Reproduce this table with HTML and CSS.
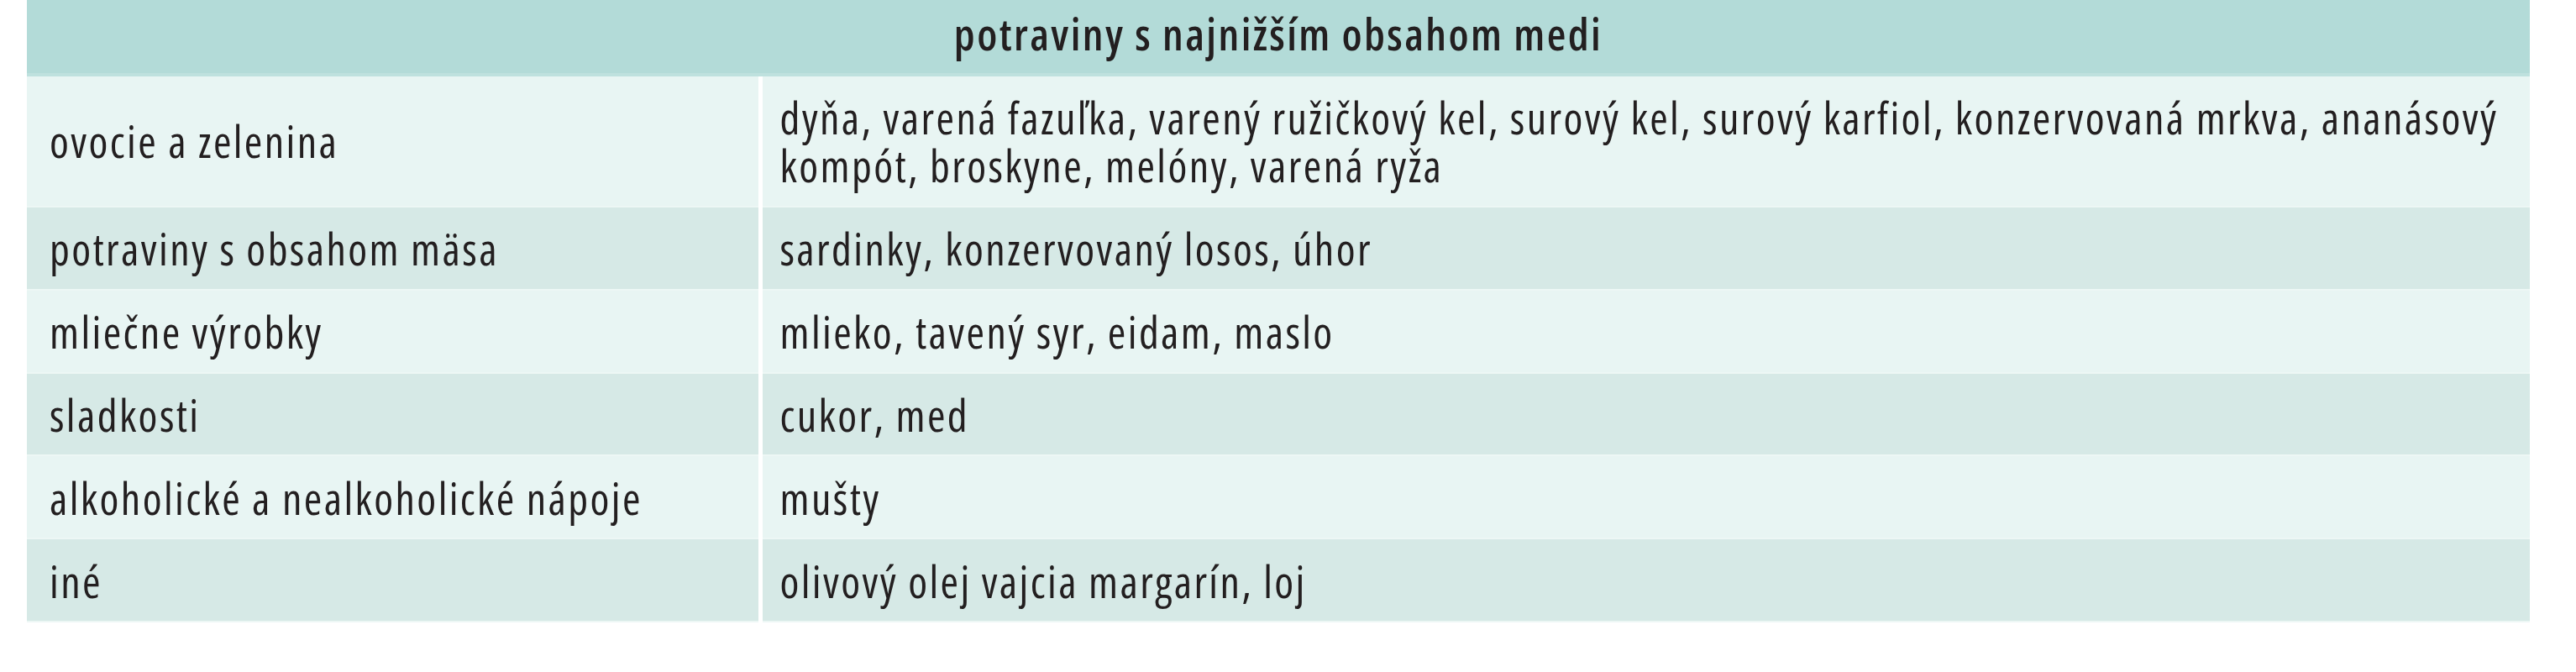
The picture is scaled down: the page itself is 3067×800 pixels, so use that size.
FILE: index.html
```html
<!DOCTYPE html>
<html lang="sk">
<head>
<meta charset="utf-8">
<title>potraviny s najnižším obsahom medi</title>
<link rel="stylesheet" href="styles.css">
</head>
<body>
<table class="food-table">
  <colgroup>
    <col class="col-category">
    <col class="col-items">
  </colgroup>
  <thead>
    <tr>
      <th class="table-title" colspan="2">potraviny s najnižším obsahom medi</th>
    </tr>
  </thead>
  <tbody>
    <tr class="row-light">
      <td class="cell-category">ovocie a zelenina</td>
      <td class="cell-items">dyňa, varená fazuľka, varený ružičkový kel, surový kel, surový karfiol, konzervovaná mrkva, ananásový kompót, broskyne, melóny, varená ryža</td>
    </tr>
    <tr class="row-dark">
      <td class="cell-category">potraviny s obsahom mäsa</td>
      <td class="cell-items">sardinky, konzervovaný losos, úhor</td>
    </tr>
    <tr class="row-light">
      <td class="cell-category">mliečne výrobky</td>
      <td class="cell-items">mlieko, tavený syr, eidam, maslo</td>
    </tr>
    <tr class="row-dark">
      <td class="cell-category">sladkosti</td>
      <td class="cell-items">cukor, med</td>
    </tr>
    <tr class="row-light">
      <td class="cell-category">alkoholické a nealkoholické nápoje</td>
      <td class="cell-items">mušty</td>
    </tr>
    <tr class="row-dark">
      <td class="cell-category">iné</td>
      <td class="cell-items">olivový olej vajcia margarín, loj</td>
    </tr>
  </tbody>
</table>
</body>
</html>
```
FILE: styles.css
```css
html, body {
  margin: 0;
  padding: 0;
  background: #ffffff;
}

body {
  padding-left: 32px;
  font-family: "Open Sans", "Noto Sans", "DejaVu Sans", sans-serif;
  font-stretch: condensed;
  font-size: 52px;
  letter-spacing: 2.4px;
  color: #231f20;
}

.food-table {
  width: 2980px;
  border-collapse: collapse;
  border-spacing: 0;
  table-layout: fixed;
}

.col-category {
  width: 873px;
}

.table-title {
  height: 91px;
  box-sizing: border-box;
  padding: 12px 27px 23px;
  background: #b3dbd8;
  box-shadow: inset 0 -4px 0 #bee1de;
  font-weight: 600;
  line-height: 56px;
  text-align: center;
  vertical-align: top;
}

.food-table td {
  padding: 21.2px 27px;
  line-height: 56.6px;
  font-weight: 400;
  text-align: left;
  vertical-align: middle;
  box-shadow: inset 0 -2px 0 #edf7f5;
}

.food-table td.cell-items {
  border-left: 5px solid #ffffff;
  padding-left: 21px;
  padding-right: 18px;
}

.row-light td {
  background-color: #e8f5f3;
}

.row-dark td {
  background-color: #d6e9e6;
}
```
